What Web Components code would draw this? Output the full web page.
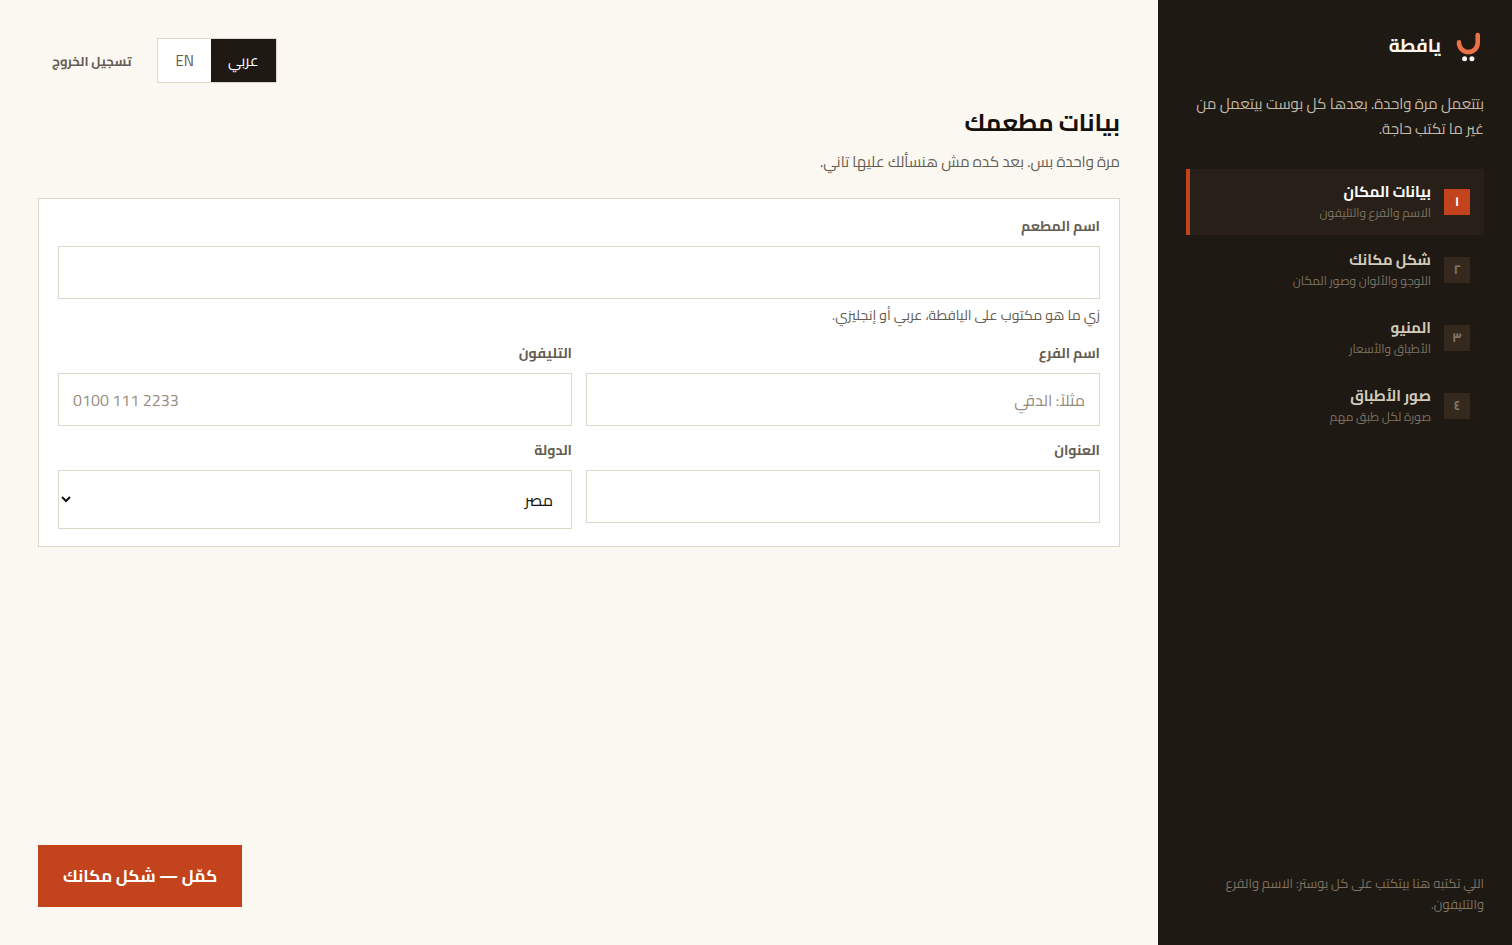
<!DOCTYPE html>
<html lang="ar" dir="rtl">
<head>
<meta charset="utf-8">
<meta name="viewport" content="width=device-width, initial-scale=1">
<title>يافطة</title>
<style>
  :root {
    --ink: #1e1912;
    --paper: #fbf8f1;
    --line: #dbd8c8;
    --muted: #665d52;
    --accent: #c2431c;
    --fs-xs: 12px;
    --fs-sm: 13px;
    --fs-label: 14px;
    --fs-md: 15px;
    --fs-field: 16px;
    --fs-lg: 17px;
    --fs-logo: 19px;
    --fs-xl: 24px;
  }
  body {
    margin: 0;
    background: var(--paper);
    color: #14110d;
    font-family: Cairo, "Noto Sans Arabic", "Noto Sans", "DejaVu Sans", sans-serif;
    font-size: var(--fs-md);
  }
</style>
</head>
<body>
<setup-page>
  <side-panel slot="side">
    <step-item number="١" heading="بيانات المكان" current>الاسم والفرع والتليفون</step-item>
    <step-item number="٢" heading="شكل مكانك">اللوجو والألوان وصور المكان</step-item>
    <step-item number="٣" heading="المنيو">الأطباق والأسعار</step-item>
    <step-item number="٤" heading="صور الأطباق">صورة لكل طبق مهم</step-item>
    <span slot="note">اللي تكتبه هنا بيتكتب على كل بوستر: الاسم والفرع والتليفون.</span>
  </side-panel>
  <top-bar></top-bar>
  <page-heading heading="بيانات مطعمك">مرة واحدة بس. بعد كده مش هنسألك عليها تاني.</page-heading>
  <form-card>
    <text-field class="wide" label="اسم المطعم" hint="زي ما هو مكتوب على اليافطة، عربي أو إنجليزي."></text-field>
    <text-field label="اسم الفرع" placeholder="مثلاً: الدقي"></text-field>
    <text-field label="التليفون" placeholder="0100 111 2233" type="tel"></text-field>
    <text-field label="العنوان"></text-field>
    <select-field label="الدولة" options="مصر"></select-field>
  </form-card>
  <next-button slot="action">كمّل — شكل مكانك</next-button>
</setup-page>
<script>
  const define = (name, render) => customElements.define(name, class extends HTMLElement {
    connectedCallback() {
      if (this.shadowRoot) return;
      const attr = key => this.getAttribute(key) || '';
      this.attachShadow({ mode: 'open' }).innerHTML = render(attr);
    }
  });

  define('setup-page', () => `
    <style>
      :host { display: flex; min-height: 100vh; }
      aside { display: flex; flex: 0 0 354px; }
      main { flex: 1; min-width: 0; display: flex; flex-direction: column; padding: 38px; box-sizing: border-box; }
      footer { margin-top: auto; display: flex; justify-content: flex-end; padding-top: 28px; }
    </style>
    <aside><slot name="side"></slot></aside>
    <main><slot></slot><footer><slot name="action"></slot></footer></main>`);

  define('brand-logo', () => `
    <style>
      :host { display: flex; align-items: center; gap: 11px; height: 34px; font-size: var(--fs-logo); font-weight: 700; color: #fbf7f0; }
      svg { display: block; width: 32px; height: 32px; overflow: visible; }
    </style>
    <svg viewBox="0 0 32 32" aria-hidden="true">
      <path d="M7 13.400v.3a9.350 9.350 0 0 0 18.700 0V6" fill="none" stroke="#ea7148" stroke-width="4.600" stroke-linecap="round"/>
      <circle cx="12.600" cy="29.800" r="2.500" fill="#fbf7f0"/><circle cx="19.900" cy="29.800" r="2.500" fill="#fbf7f0"/>
    </svg>
    <span>يافطة</span>`);

  define('side-panel', () => `
    <style>
      :host { flex: 1; display: flex; flex-direction: column; padding: 28px 28px 30px; box-sizing: border-box; background: var(--ink); color: #c3baab; }
      .intro { margin: 29px 0 28px; line-height: 25px; }
      ol { margin: 0; padding: 0; list-style: none; display: flex; flex-direction: column; gap: 2px; }
      .note { margin: auto 0 0; font-size: var(--fs-sm); line-height: 21px; color: #7d7263; }
    </style>
    <brand-logo></brand-logo>
    <p class="intro">بتتعمل مرة واحدة. بعدها كل بوست بيتعمل من غير ما تكتب حاجة.</p>
    <ol role="list"><slot></slot></ol>
    <p class="note"><slot name="note"></slot></p>`);

  define('step-item', attr => `
    <style>
      :host { display: flex; align-items: center; gap: 13px; height: 66px; padding: 0 14px; box-sizing: border-box; border-left: 4px solid transparent; }
      :host([current]) { background: #282018; border-left-color: var(--accent); }
      .badge { flex: none; width: 26px; height: 26px; line-height: 24px; text-align: center; background: #35291e; color: #82766a; font-size: var(--fs-sm); font-weight: 700; }
      :host([current]) .badge { background: var(--accent); color: #fff; }
      .text { display: flex; flex-direction: column; }
      b { line-height: 21px; color: #d3cabb; }
      :host([current]) b { color: #fff; }
      small { font-size: var(--fs-xs); line-height: 22px; color: #7d7263; }
    </style>
    <span class="badge">${attr('number')}</span>
    <span class="text"><b>${attr('heading')}</b><small><slot></slot></small></span>`);

  define('top-bar', () => `
    <style>
      :host { display: flex; justify-content: flex-end; align-items: center; gap: 12px; }
      .lang { display: flex; border: 1px solid var(--line); }
      button { height: 43px; padding: 0 17px; border: 0; background: #fff; color: var(--muted); font: inherit; cursor: pointer; }
      button[aria-pressed=true] { background: var(--ink); color: #fff; }
      a { padding: 0 14px; font-size: var(--fs-sm); font-weight: 700; color: var(--muted); text-decoration: none; }
    </style>
    <div class="lang" role="group" aria-label="اللغة">
      <button type="button" aria-pressed="true">عربي</button><button type="button" aria-pressed="false" lang="en">EN</button>
    </div>
    <a href="#logout">تسجيل الخروج</a>`);

  define('page-heading', attr => `
    <style>
      :host { display: block; margin: 20px 0 23px; }
      h1 { margin: 0; font-size: var(--fs-xl); line-height: 40px; font-weight: 700; }
      p { margin: 6px 0 0; line-height: 26px; color: var(--muted); }
    </style>
    <h1>${attr('heading')}</h1>
    <p><slot></slot></p>`);

  define('form-card', () => `
    <style>
      :host { display: grid; grid-template-columns: 1fr 1fr; align-items: start; gap: 15px 14px; padding: 18px 19px 17px; border: 1px solid var(--line); background: #fff; }
      ::slotted(.wide) { grid-column: 1 / -1; }
    </style>
    <slot></slot>`);

  const fieldStyles = `
      :host { display: flex; flex-direction: column; min-width: 0; }
      label { margin-bottom: 11px; font-size: var(--fs-label); line-height: 18px; font-weight: 700; color: var(--muted); }
      input, select { width: 100%; height: 53px; margin: 0; padding: 0 14px; box-sizing: border-box; border: 1px solid var(--line); border-radius: 0; background: #fff; color: #14110d; font: inherit; font-size: var(--fs-field); }
      select { height: 59px; }
      ::placeholder { color: #978d80; opacity: 1; }
      input[type=tel] { direction: ltr; text-align: left; }
      p { margin: 4px 0 2px; font-size: var(--fs-label); line-height: 24px; color: var(--muted); }`;

  define('text-field', attr => `
    <style>${fieldStyles}</style>
    <label for="control">${attr('label')}</label>
    <input id="control" type="${attr('type') || 'text'}" placeholder="${attr('placeholder')}">
    ${attr('hint') ? `<p>${attr('hint')}</p>` : ''}`);

  define('select-field', attr => `
    <style>${fieldStyles}</style>
    <label for="control">${attr('label')}</label>
    <select id="control">${attr('options').split(',').map(name => `<option>${name}</option>`).join('')}</select>`);

  define('next-button', () => `
    <style>
      :host { display: block; }
      button { height: 62px; padding: 0 25px; border: 0; background: var(--accent); color: #fff; font: inherit; font-size: var(--fs-lg); font-weight: 700; cursor: pointer; }
    </style>
    <button type="button"><slot></slot></button>`);
</script>
</body>
</html>
